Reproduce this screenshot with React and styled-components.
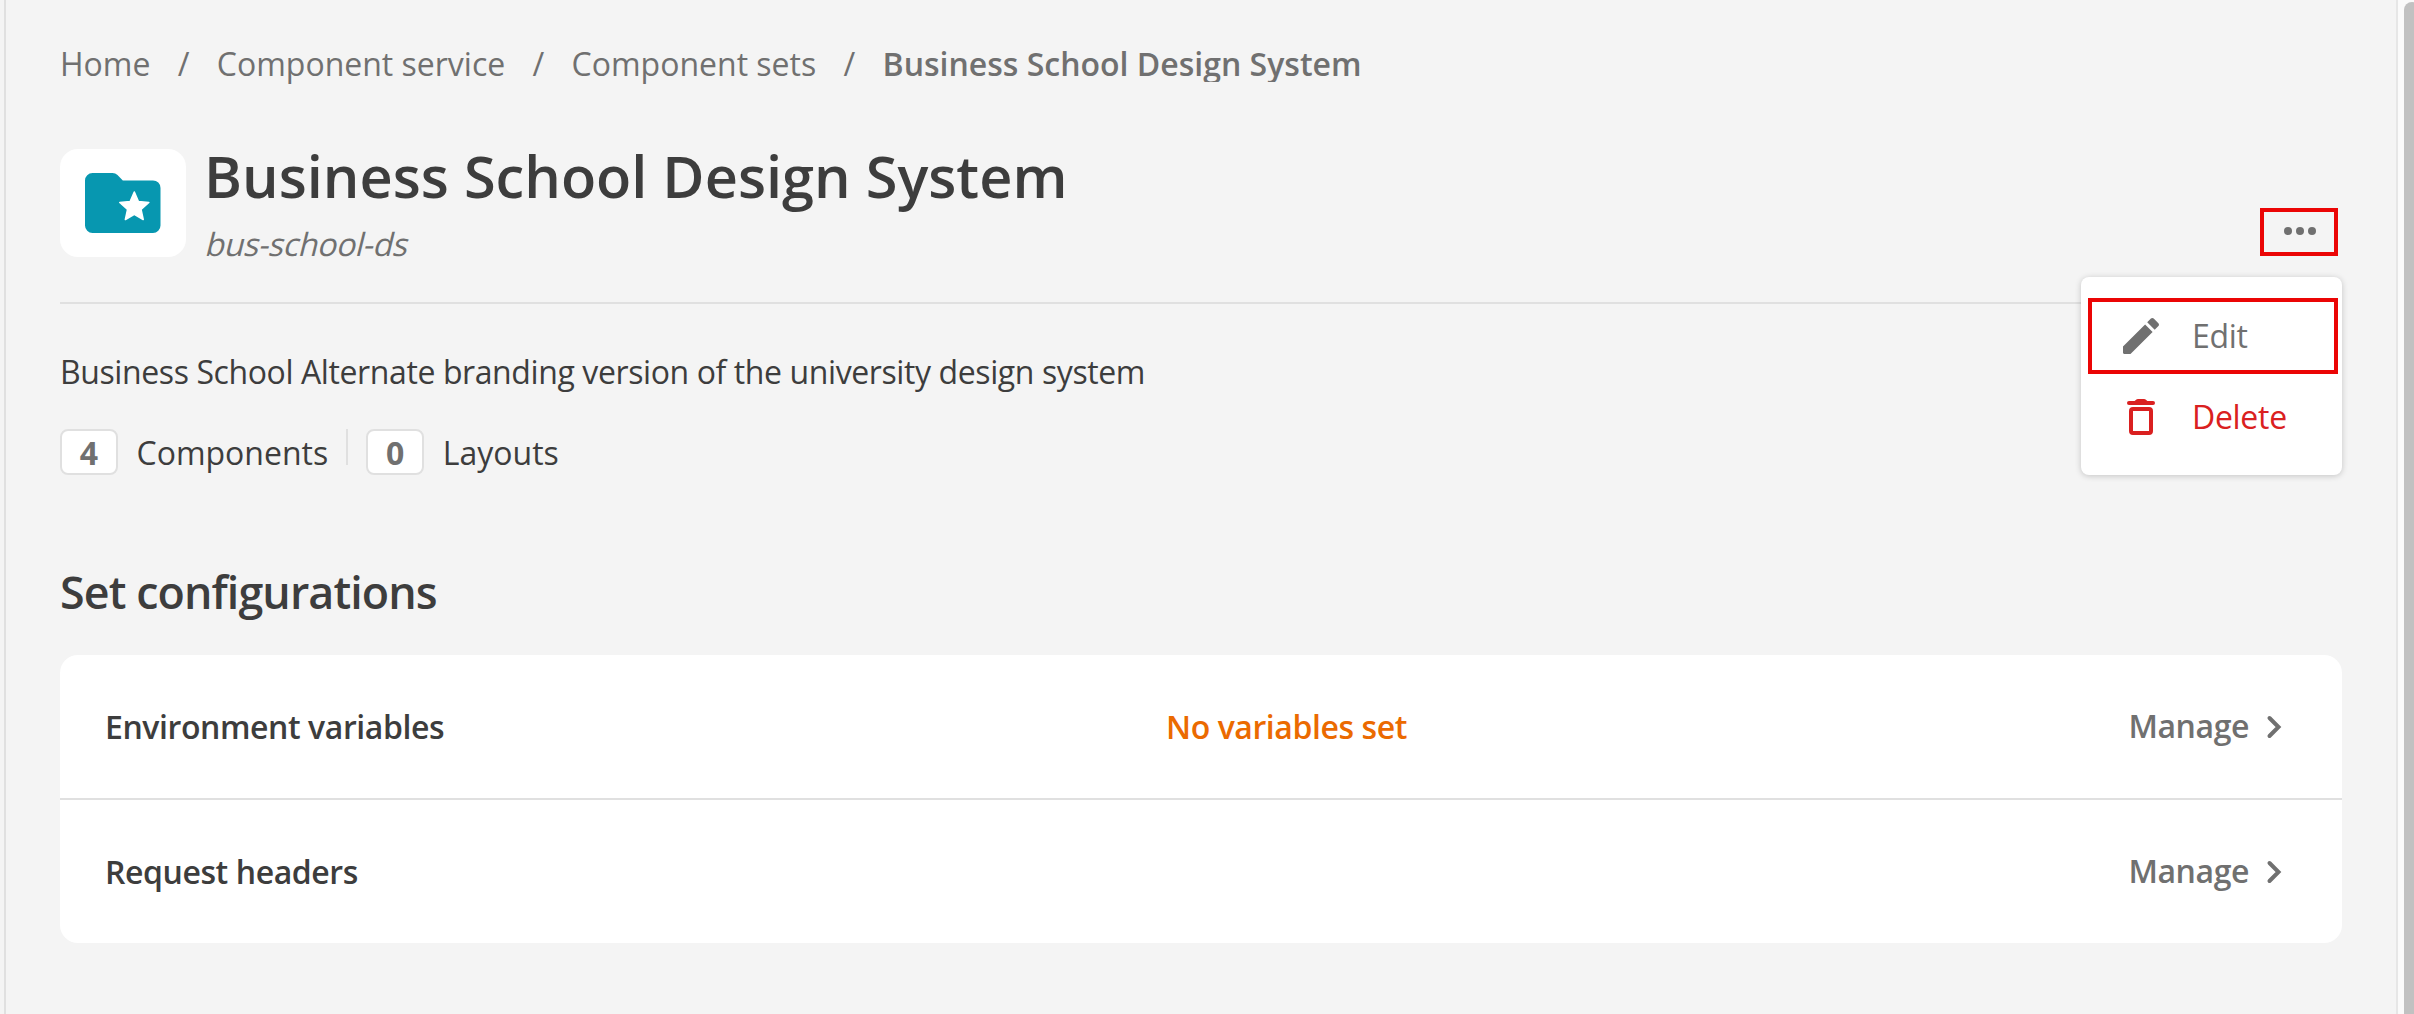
import React from 'react';
import styled, { createGlobalStyle } from 'styled-components';

const GlobalStyle = createGlobalStyle`
  * {
    box-sizing: border-box;
  }

  body {
    margin: 0;
    background: #f4f4f4;
    color: #3d3d3d;
    font-family: 'Open Sans', sans-serif;
    font-size: 32px;
    line-height: 44px;
    overflow: hidden;
  }
`;

const Page = styled.div`
  display: flex;
  height: 1014px;
  padding-left: 4px;
`;

const Main = styled.main`
  flex: 1;
  padding: 46px 54px 0;
  border-left: 2px solid #e0e0e0;
  border-right: 2px solid #e6e6e6;
`;

const ScrollTrack = styled.div`
  width: 16px;
  padding: 2px 0 0 6px;
  background: #fafafa;
  overflow: hidden;
`;

const ScrollThumb = styled.div`
  width: 16px;
  height: 1100px;
  border-radius: 8px;
  background: #c1c1c1;
`;

const Breadcrumb = styled.nav`
  display: flex;
  line-height: 36px;
  color: #707070;
`;

const Crumb = styled.span`
  font-weight: ${props => (props.$current ? 600 : 400)};
  overflow: ${props => (props.$current ? 'hidden' : 'visible')};
`;

const Separator = styled.span`
  margin: 0 27.3px;
`;

const Header = styled.header`
  display: flex;
  align-items: flex-start;
  height: 158px;
  margin-top: 64px;
  border-bottom: 2px solid #e0e0e0;
`;

const Tile = styled.div`
  display: flex;
  align-items: center;
  justify-content: center;
  width: 126px;
  height: 108px;
  margin: 3px 18px 0 0;
  border-radius: 18px;
  background: #fff;
`;

const Title = styled.h1`
  margin: 0;
  font-size: 57.7px;
  line-height: 60px;
  font-weight: 600;
`;

const MachineName = styled.p`
  width: max-content;
  margin: 16px 0 0;
  color: #707070;
  letter-spacing: -0.35px;
  transform: skewX(-14deg);
  transform-origin: 0 34px;
`;

const Actions = styled.div`
  position: relative;
  margin: 62px 4px 0 auto;
`;

const MoreButton = styled.button`
  display: flex;
  align-items: center;
  justify-content: center;
  width: 78px;
  height: 48px;
  padding: 0 0 2px 2px;
  border: 4px solid #eb0505;
  background: none;
`;

const Menu = styled.ul`
  position: absolute;
  top: 69px;
  right: -4px;
  display: flex;
  flex-direction: column;
  gap: 5px;
  width: 261px;
  height: 198px;
  margin: 0;
  padding: 21px 4px 0 7px;
  border-radius: 8px;
  background: #fff;
  box-shadow: 0 1px 6px rgba(0, 0, 0, 0.2);
  list-style: none;
`;

const MenuItem = styled.li`
  display: flex;
  align-items: center;
  height: 76px;
  padding-left: 25px;
  border: 4px solid ${props => (props.$active ? '#eb0505' : 'transparent')};
  color: ${props => (props.$danger ? '#da2020' : '#707070')};
  letter-spacing: -0.3px;

  svg {
    margin-right: 27px;
  }
`;

const Description = styled.p`
  margin: 46px 0 0;
  letter-spacing: -0.4px;
`;

const Stats = styled.div`
  display: flex;
  height: 46px;
  margin-top: 35px;
  line-height: 47px;
`;

const Count = styled.span`
  width: 58px;
  height: 46px;
  margin-right: 18.5px;
  border: 2px solid #e0e0e0;
  border-radius: 8px;
  background: #fff;
  color: #707070;
  font-weight: 700;
  line-height: 44px;
  text-align: center;
`;

const Divider = styled.span`
  width: 2px;
  height: 36px;
  margin: 0 18px;
  background: #e0e0e0;
`;

const SectionTitle = styled.h2`
  margin: 87px 0 0;
  font-size: 44.8px;
  line-height: 60px;
  font-weight: 600;
  letter-spacing: -0.9px;
`;

const Card = styled.section`
  margin-top: 33px;
  border-radius: 18px;
  background: #fff;
`;

const Row = styled.div`
  display: grid;
  grid-template-columns: 1061px 1fr auto;
  align-items: center;
  box-sizing: content-box;
  height: 143px;
  padding: 0 60px 0 45px;
  font-weight: 600;
  letter-spacing: -0.42px;

  &:first-child {
    border-bottom: 2px solid #e0e0e0;
  }
`;

const Status = styled.span`
  color: #eb6a00;
`;

const Manage = styled.a`
  display: flex;
  align-items: center;
  padding-bottom: 2px;
  color: #707070;

  svg {
    margin: 3px 0 0 17px;
  }
`;

const FolderIcon = () => (
  <svg width="76" height="60" viewBox="0 0 76 60">
    <path
      d="M7.500 0h20c2 0 3.600.7 5 2l5.300 5.400H68a7.500 7.500 0 0 1 7.500 7.500v37.600A7.500 7.500 0 0 1 68 60H7.500A7.500 7.500 0 0 1 0 52.500v-45A7.500 7.500 0 0 1 7.500 0z"
      fill="#0797b0"
    />
    <path
      d="M49.300 19l4.100 9.500 10.400 1-7.800 6.900 2.200 10.100-8.900-5.300-8.900 5.300 2.200-10.100-7.800-6.900 10.400-1z"
      fill="#fff"
      stroke="#fff"
      strokeWidth="1.6"
      strokeLinejoin="round"
    />
  </svg>
);

const DotsIcon = () => (
  <svg width="32" height="8" viewBox="0 0 32 8" fill="#707070">
    <circle cx="4" cy="4" r="4" />
    <circle cx="16" cy="4" r="4" />
    <circle cx="28" cy="4" r="4" />
  </svg>
);

const PencilIcon = () => (
  <svg width="48" height="48" viewBox="0 0 24 24" fill="currentColor">
    <path d="M3 17.250v3.150c0 .3.300.6.600.6h3.150L17.800 9.940l-3.750-3.750L3 17.250zM20.700 7.040c.4-.4.400-1 0-1.400l-2.350-2.350c-.4-.4-1-.4-1.400 0l-1.850 1.830 3.750 3.750 1.850-1.830z" />
  </svg>
);

const TrashIcon = () => (
  <svg width="48" height="48" viewBox="0 0 24 24" fill="none">
    <rect
      x="7"
      y="8"
      width="10"
      height="12"
      rx="1"
      stroke="currentColor"
      strokeWidth="2"
    />
    <path
      d="M6 5h12"
      stroke="currentColor"
      strokeWidth="2"
      strokeLinecap="round"
    />
    <path
      d="M8.500 4.200l1.200-1q.3-.2.700-.2h3.200q.4 0 .7.200l1.200 1z"
      fill="currentColor"
    />
  </svg>
);

const ChevronIcon = () => (
  <svg width="16" height="24" viewBox="0 0 16 24" fill="none">
    <path
      d="M3.500 3l9 9-9 9"
      stroke="currentColor"
      strokeWidth="4"
      strokeLinecap="round"
    />
  </svg>
);

const crumbs = [
  'Home',
  'Component service',
  'Component sets',
  'Business School Design System'
];

const configurations = [
  { name: 'Environment variables', status: 'No variables set' },
  { name: 'Request headers', status: '' }
];

const App = () => (
  <>
    <GlobalStyle />
    <Page>
      <Main>
        <Breadcrumb>
          {crumbs.map((crumb, i) => (
            <React.Fragment key={crumb}>
              {i > 0 && <Separator>/</Separator>}
              <Crumb $current={i === crumbs.length - 1}>{crumb}</Crumb>
            </React.Fragment>
          ))}
        </Breadcrumb>
        <Header>
          <Tile>
            <FolderIcon />
          </Tile>
          <div>
            <Title>Business School Design System</Title>
            <MachineName>bus-school-ds</MachineName>
          </div>
          <Actions>
            <MoreButton aria-label="More actions">
              <DotsIcon />
            </MoreButton>
            <Menu>
              <MenuItem $active>
                <PencilIcon />
                Edit
              </MenuItem>
              <MenuItem $danger>
                <TrashIcon />
                Delete
              </MenuItem>
            </Menu>
          </Actions>
        </Header>
        <Description>
          Business School Alternate branding version of the university design
          system
        </Description>
        <Stats>
          <Count>4</Count>
          Components
          <Divider />
          <Count>0</Count>
          Layouts
        </Stats>
        <SectionTitle>Set configurations</SectionTitle>
        <Card>
          {configurations.map(({ name, status }) => (
            <Row key={name}>
              <span>{name}</span>
              <Status>{status}</Status>
              <Manage>
                Manage
                <ChevronIcon />
              </Manage>
            </Row>
          ))}
        </Card>
      </Main>
      <ScrollTrack>
        <ScrollThumb />
      </ScrollTrack>
    </Page>
  </>
);

export default App;
